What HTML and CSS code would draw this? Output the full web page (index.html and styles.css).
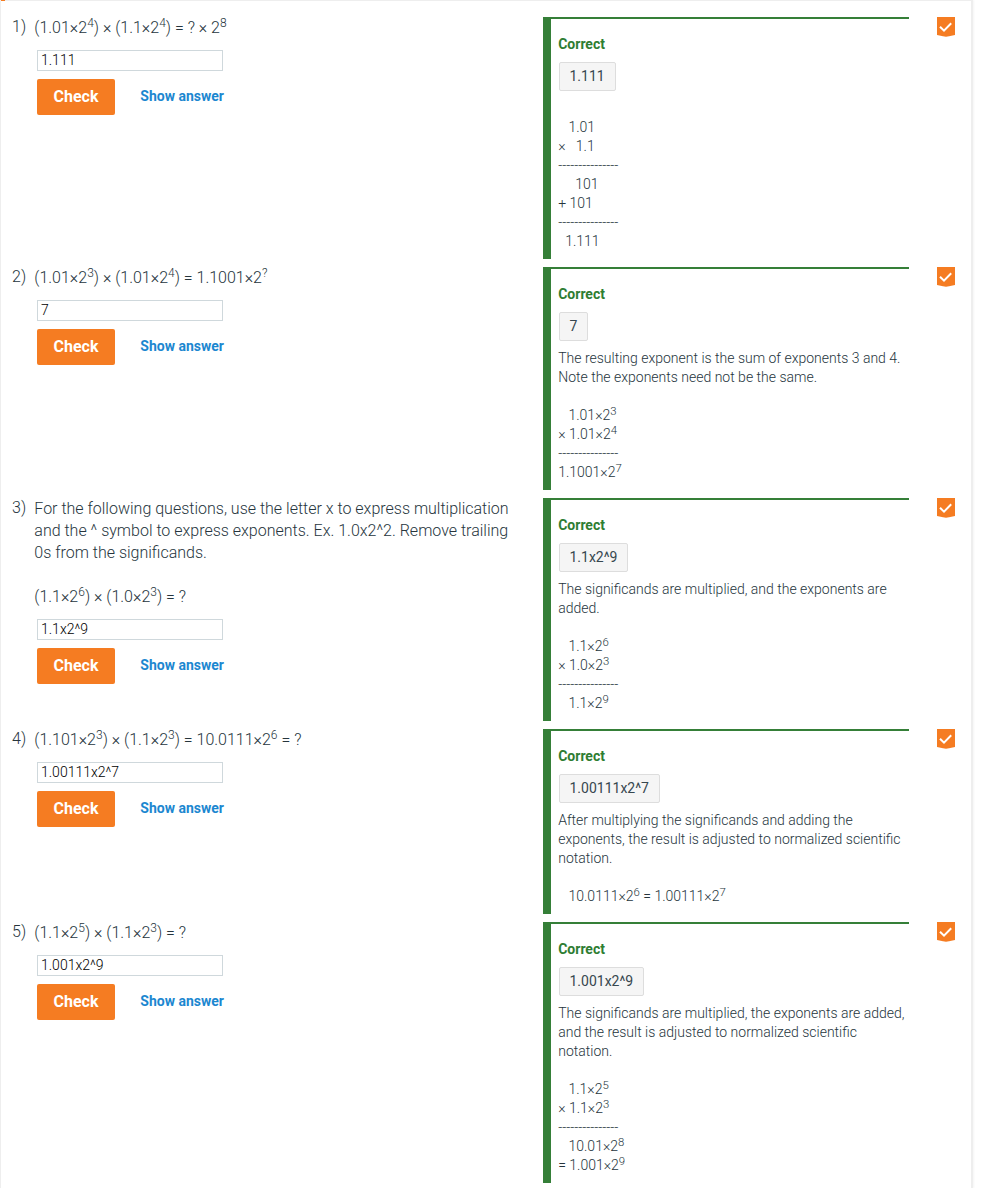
FILE: index.html
```html
<!DOCTYPE html>
<html lang="en">
<head>
<meta charset="utf-8">
<title>Binary multiplication</title>
<link rel="stylesheet" href="styles.css">
</head>
<body>
<svg class="defs" width="0" height="0"><symbol id="mark" viewBox="0 0 18 20"><path d="M0 0h18v18L12 19.3Q9 20 6 19.3L0 18z" fill="#f57c22"/><path d="M3 9.8l4 3.9 7.2-7.4" fill="none" stroke="#fff" stroke-width="2"/></symbol></svg>
<main class="page">
<section class="question">
<div class="number">1)</div>
<div class="work">
<p class="prompt">(1.01×2<sup>4</sup>) × (1.1×2<sup>4</sup>) = ? × 2<sup>8</sup></p>
<input class="field" value="1.111">
<div class="actions"><button class="check">Check</button><a class="show">Show answer</a></div>
</div>
<div class="panel">
<h2 class="status">Correct</h2><div class="chip">1.111</div>
<pre class="explain">

<b class="a"></b>1.01
×<b class="c"></b>1.1
---------------
<b class="d"></b>101
+ 101
---------------
<b class="e"></b>1.111</pre>
</div>
<svg class="mark"><use href="#mark"/></svg>
</section>
<section class="question">
<div class="number">2)</div>
<div class="work">
<p class="prompt">(1.01×2<sup>3</sup>) × (1.01×2<sup>4</sup>) = 1.1001×2<sup>?</sup></p>
<input class="field" value="7">
<div class="actions"><button class="check">Check</button><a class="show">Show answer</a></div>
</div>
<div class="panel">
<h2 class="status">Correct</h2><div class="chip">7</div>
<pre class="explain">The resulting exponent is the sum of exponents 3 and 4.
Note the exponents need not be the same.

<b class="a"></b>1.01×2<sup>3</sup>
× 1.01×2<sup>4</sup>
---------------
1.1001×2<sup>7</sup></pre>
</div>
<svg class="mark"><use href="#mark"/></svg>
</section>
<section class="question">
<div class="number">3)</div>
<div class="work">
<p class="prompt">For the following questions, use the letter x to express multiplication
and the ^ symbol to express exponents. Ex. 1.0x2^2. Remove trailing
0s from the significands.

(1.1×2<sup>6</sup>) × (1.0×2<sup>3</sup>) = ?</p>
<input class="field" value="1.1x2^9">
<div class="actions"><button class="check">Check</button><a class="show">Show answer</a></div>
</div>
<div class="panel">
<h2 class="status">Correct</h2><div class="chip">1.1x2^9</div>
<pre class="explain">The significands are multiplied, and the exponents are
added.

<b class="a"></b>1.1×2<sup>6</sup>
× 1.0×2<sup>3</sup>
---------------
<b class="a"></b>1.1×2<sup>9</sup></pre>
</div>
<svg class="mark"><use href="#mark"/></svg>
</section>
<section class="question">
<div class="number">4)</div>
<div class="work">
<p class="prompt">(1.101×2<sup>3</sup>) × (1.1×2<sup>3</sup>) = 10.0111×2<sup>6</sup> = ?</p>
<input class="field" value="1.00111x2^7">
<div class="actions"><button class="check">Check</button><a class="show">Show answer</a></div>
</div>
<div class="panel">
<h2 class="status">Correct</h2><div class="chip">1.00111x2^7</div>
<pre class="explain">After multiplying the significands and adding the
exponents, the result is adjusted to normalized scientific
notation.

<b class="a"></b>10.0111×2<sup>6</sup> = 1.00111×2<sup>7</sup></pre>
</div>
<svg class="mark"><use href="#mark"/></svg>
</section>
<section class="question">
<div class="number">5)</div>
<div class="work">
<p class="prompt">(1.1×2<sup>5</sup>) × (1.1×2<sup>3</sup>) = ?</p>
<input class="field" value="1.001x2^9">
<div class="actions"><button class="check">Check</button><a class="show">Show answer</a></div>
</div>
<div class="panel">
<h2 class="status">Correct</h2><div class="chip">1.001x2^9</div>
<pre class="explain">The significands are multiplied, the exponents are added,
and the result is adjusted to normalized scientific
notation.

<b class="a"></b>1.1×2<sup>5</sup>
× 1.1×2<sup>3</sup>
---------------
<b class="a"></b>10.01×2<sup>8</sup>
= 1.001×2<sup>9</sup></pre>
</div>
<svg class="mark"><use href="#mark"/></svg>
</section>
</main>
<div class="tab"></div>
</body>
</html>
```

FILE: styles.css
```css
* { box-sizing: border-box; }
html, body { margin: 0; height: 1188px; overflow: hidden; background: #fff; }
body { font-family: Roboto, sans-serif; font-weight: 300; color: #26353d; }
.defs { position: absolute; }
.page {
  width: 973px; height: 1188px; padding: 16px 0 0 11px;
  border: 1px solid #eee; border-right-width: 2px; border-bottom: 0;
  box-shadow: 1px 0 2px #f5f5f5;
  display: flex; flex-direction: column; gap: 8px;
}
.tab { position: absolute; top: 0; left: 1px; width: 4px; height: 1px; background: #f57c22; }
.question { display: grid; grid-template-columns: 22px 509px 366px 18px; align-items: start; }
.question .mark { margin-left: 28px; }
.number, .prompt { font-size: 16px; line-height: 22px; margin: -1px 0 0; }
.prompt { white-space: pre; margin-top: 0; padding-left: .3px; }
sup { font-size: .8125em; line-height: 0; vertical-align: baseline; position: relative; top: -.44em; }
.prompt sup { font-size: 12px; top: -.53em; }
.field {
  display: block; width: 186px; height: 21px; margin: 11px 0 8px 3px; padding: 0 3px 1px;
  border: 1px solid #cfd8dc; font: 300 14px Roboto, sans-serif; color: #000; background: #fff;
}
.actions { display: flex; align-items: center; gap: 25px; margin-left: 3px; }
.check {
  width: 78px; height: 36px; padding: 0 0 2px; border: 0; border-radius: 2px;
  background: #f57c22; color: #fff; font: 700 16px Roboto, sans-serif;
}
.show { font-size: 14px; font-weight: 700; color: #1c87d0; line-height: 34px; margin-bottom: 2px; padding-left: .3px; }
.panel { border-top: 2px solid #357f38; border-left: 8px solid #357f38; padding: 16px 0 8px 7.2px; }
.status { margin: 0 0 8px; font-size: 14px; line-height: 19px; font-weight: 700; color: #2e7d32; }
.chip {
  width: fit-content; height: 29px; padding: 0 10px 0 9.5px; margin: 0 0 8px .8px;
  border: 1px solid #ddd; border-radius: 2px; background: #f5f5f5;
  font-size: 14px; line-height: 27px; font-weight: 400; color: #37474f;
}
.explain { margin: 0; font: 300 14px/19px Roboto, sans-serif; }
.mark { display: block; width: 18px; height: 20px; }
.a, .c, .d, .e { display: inline-block; }
.a { width: 10.3px; }
.c { width: 10.3px; }
.d { width: 17px; }
.e { width: 7px; }
```
